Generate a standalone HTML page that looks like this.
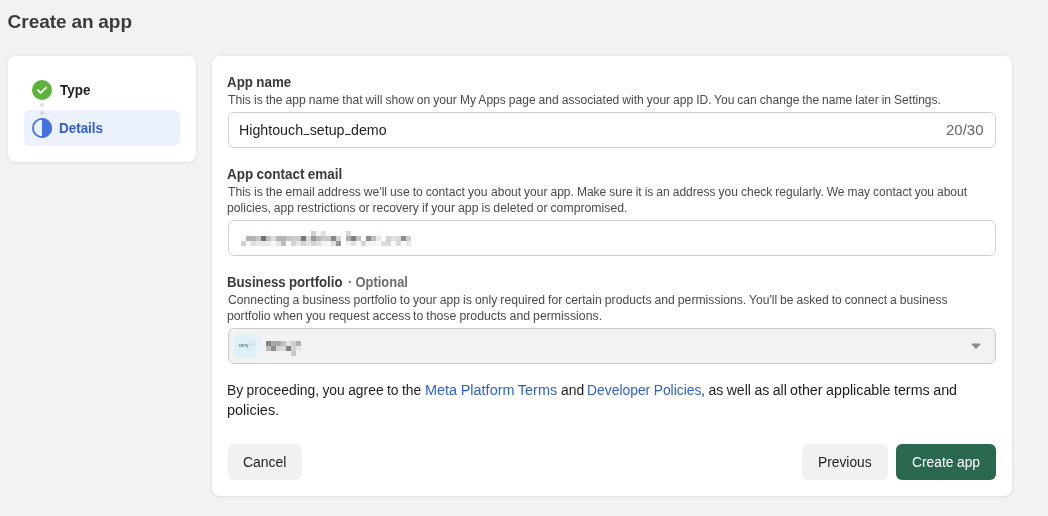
<!DOCTYPE html>
<html lang="en">
<head>
<meta charset="utf-8">
<title>Create an app</title>
<style>
*{box-sizing:border-box;margin:0;padding:0}
html,body{width:1048px;height:516px;overflow:hidden;background:#f2f2f2}
body{font-family:"Liberation Sans",sans-serif;color:#1c1e21;position:relative}
.t{position:absolute;display:block;white-space:pre;transform-origin:0 0;text-decoration:none;font-style:normal}
#root{position:absolute;left:0;top:0;width:1048px;height:516px;will-change:transform}
.t i{font-style:normal;display:inline-block;width:6.5px;transform-origin:0 0;transform:translate(0.7px,-2.6px) scaleX(0.68)}
.abs{position:absolute}
.card{position:absolute;background:#fff;border-radius:8px;box-shadow:0 0 4px rgba(0,0,0,.07),0 1px 2px rgba(0,0,0,.05)}
#side{left:8px;top:56px;width:188px;height:106px}
#main{left:212px;top:56px;width:800px;height:440px}
.hl{position:absolute;left:24px;top:110px;width:156px;height:36px;border-radius:6px;background:#ebf1fd}
.dot{position:absolute;width:4px;height:4px;border-radius:50%;left:40px}
.field{position:absolute;left:228px;width:768px;height:36px;border:1px solid #d0d0d0;border-radius:6px;background:#fff}
.field.dis{background:#f2f2f2;border-color:#cbcbcb}
.btn{position:absolute;top:444px;height:36px;border-radius:6px;background:#f1f1f1}
.btn.primary{background:#2a694e}
.px{position:absolute;width:5px;height:5px}
</style>
</head>
<body>
<div id="root">
<h1 id="t_title" class="t" style="left:7.55px;top:11px;font-size:19px;line-height:21px;font-weight:700;color:#3b3b3b;word-spacing:-0.58px;transform:scaleX(1.0000)">Create an app</h1>

<nav class="card" id="side"></nav>
<div class="hl"></div>
<svg class="abs" style="left:32px;top:80px" width="20" height="20" viewBox="0 0 20 20"><circle cx="10" cy="10" r="10" fill="#5db33a"/><path d="M5.9 10.2L8.6 12.9L14.1 7.6" fill="none" stroke="#fff" stroke-width="1.9" stroke-linecap="round" stroke-linejoin="round"/></svg>
<div class="dot" style="top:103px;background:#dddfe2"></div>
<div class="dot" style="top:111px;background:#d3d8e4"></div>
<svg class="abs" style="left:32px;top:118px" width="20" height="20" viewBox="0 0 20 20"><circle cx="10" cy="10" r="9.1" fill="none" stroke="#4470e0" stroke-width="1.8"/><path d="M10 0a10 10 0 0 1 0 20z" fill="#4470e0"/></svg>
<span id="t_type" class="t" style="left:59.50px;top:82px;font-size:14px;line-height:16px;font-weight:700;color:#1c1e21;word-spacing:-0.43px;transform:scaleX(0.9599)">Type</span>
<span id="t_details" class="t" style="left:58.65px;top:120px;font-size:14px;line-height:16px;font-weight:700;color:#2f5fcc;word-spacing:-0.43px;transform:scaleX(0.9595)">Details</span>

<main class="card" id="main"></main>

<label id="t_l1" class="t" style="left:226.55px;top:74px;font-size:14px;line-height:16px;font-weight:700;color:#3a3a3a;word-spacing:-0.43px;transform:scaleX(0.9547)">App name</label>
<p><span id="t_h1a" class="t" style="left:227.70px;top:93px;font-size:12px;line-height:14px;font-weight:400;color:#4a4a4a;word-spacing:-0.37px;transform:scaleX(1.0122)">This is the app name that will show on your</span> <span id="t_h1b" class="t" style="left:459.50px;top:93px;font-size:12px;line-height:14px;font-weight:400;color:#4a4a4a;word-spacing:-0.37px;transform:scaleX(1.0042)">My Apps page and associated with your app ID.</span> <span id="t_h1c" class="t" style="left:713.60px;top:93px;font-size:12px;line-height:14px;font-weight:400;color:#4a4a4a;word-spacing:-0.37px;transform:scaleX(1.0052)">You can change the name later in Settings.</span></p>
<div class="field" style="top:112px"></div>
<span id="t_val" class="t" style="left:238.50px;top:122px;font-size:14px;line-height:16px;font-weight:400;color:#1c1e21;word-spacing:-0.43px;transform:scaleX(1.0159)">Hightouch<i>_</i>setup<i>_</i>demo</span>
<span id="t_cnt" class="t" style="left:945.70px;top:122px;font-size:14px;line-height:16px;font-weight:400;color:#666666;word-spacing:-0.43px;transform:scaleX(1.0712)">20/30</span>

<label id="t_l2" class="t" style="left:226.70px;top:166px;font-size:14px;line-height:16px;font-weight:700;color:#3a3a3a;word-spacing:-0.43px;transform:scaleX(0.9625)">App contact email</label>
<p><span id="t_h2a" class="t" style="left:227.70px;top:185px;font-size:12px;line-height:14px;font-weight:400;color:#4a4a4a;word-spacing:-0.37px;transform:scaleX(1.0120)">This is the email address we'll use to contact you</span> <span id="t_h2b" class="t" style="left:490.55px;top:185px;font-size:12px;line-height:14px;font-weight:400;color:#4a4a4a;word-spacing:-0.37px;transform:scaleX(1.0030)">about your app. Make sure it is an address you</span> <span id="t_h2c" class="t" style="left:740.50px;top:185px;font-size:12px;line-height:14px;font-weight:400;color:#4a4a4a;word-spacing:-0.37px;transform:scaleX(0.9995)">check regularly. We may contact you about</span> <span id="t_h2d" class="t" style="left:226.70px;top:201px;font-size:12px;line-height:14px;font-weight:400;color:#4a4a4a;word-spacing:-0.37px;transform:scaleX(1.0105)">policies, app restrictions or recovery</span> <span id="t_h2e" class="t" style="left:421.60px;top:201px;font-size:12px;line-height:14px;font-weight:400;color:#4a4a4a;word-spacing:-0.37px;transform:scaleX(1.0210)">if your app is deleted or compromised.</span></p>
<div class="field" style="top:220px"></div>
<svg class="abs" style="left:241px;top:231px" width="175" height="15" viewBox="0 0 175 15" shape-rendering="crispEdges"><rect x="5" y="0" width="5" height="5" fill="#fafafa"/><rect x="25" y="0" width="5" height="5" fill="#fcfcfc"/><rect x="30" y="0" width="5" height="5" fill="#fdfdfd"/><rect x="70" y="0" width="5" height="5" fill="#cfcfcf"/><rect x="75" y="0" width="5" height="5" fill="#f5f5f5"/><rect x="80" y="0" width="5" height="5" fill="#e0e0e0"/><rect x="85" y="0" width="5" height="5" fill="#fafafa"/><rect x="100" y="0" width="5" height="5" fill="#fbfbfb"/><rect x="105" y="0" width="5" height="5" fill="#d8d8d8"/><rect x="135" y="0" width="5" height="5" fill="#fafafa"/><rect x="0" y="5" width="5" height="5" fill="#fbfbfb"/><rect x="5" y="5" width="5" height="5" fill="#b0b0b0"/><rect x="10" y="5" width="5" height="5" fill="#b3b3b3"/><rect x="15" y="5" width="5" height="5" fill="#c8c8c8"/><rect x="20" y="5" width="5" height="5" fill="#707070"/><rect x="25" y="5" width="5" height="5" fill="#c0c0c0"/><rect x="30" y="5" width="5" height="5" fill="#dedede"/><rect x="35" y="5" width="5" height="5" fill="#b4b4b4"/><rect x="40" y="5" width="5" height="5" fill="#b6b6b6"/><rect x="45" y="5" width="5" height="5" fill="#c4c4c4"/><rect x="50" y="5" width="5" height="5" fill="#cbcbcb"/><rect x="55" y="5" width="5" height="5" fill="#cccccc"/><rect x="60" y="5" width="5" height="5" fill="#787878"/><rect x="65" y="5" width="5" height="5" fill="#d8d8d8"/><rect x="70" y="5" width="5" height="5" fill="#999999"/><rect x="75" y="5" width="5" height="5" fill="#b5b5b5"/><rect x="80" y="5" width="5" height="5" fill="#cacaca"/><rect x="85" y="5" width="5" height="5" fill="#c8c8c8"/><rect x="90" y="5" width="5" height="5" fill="#888888"/><rect x="95" y="5" width="5" height="5" fill="#d4d4d4"/><rect x="100" y="5" width="5" height="5" fill="#fdfdfd"/><rect x="105" y="5" width="5" height="5" fill="#b0b0b0"/><rect x="110" y="5" width="5" height="5" fill="#808080"/><rect x="115" y="5" width="5" height="5" fill="#c0c0c0"/><rect x="120" y="5" width="5" height="5" fill="#fcfcfc"/><rect x="125" y="5" width="5" height="5" fill="#8c8c8c"/><rect x="130" y="5" width="5" height="5" fill="#bcbcbc"/><rect x="135" y="5" width="5" height="5" fill="#e8e8e8"/><rect x="145" y="5" width="5" height="5" fill="#d2d2d2"/><rect x="150" y="5" width="5" height="5" fill="#e0e0e0"/><rect x="155" y="5" width="5" height="5" fill="#dadada"/><rect x="160" y="5" width="5" height="5" fill="#8e8e8e"/><rect x="165" y="5" width="5" height="5" fill="#cdcdcd"/><rect x="170" y="5" width="5" height="5" fill="#fafafa"/><rect x="0" y="10" width="5" height="5" fill="#d0d0d0"/><rect x="5" y="10" width="5" height="5" fill="#f8f8f8"/><rect x="10" y="10" width="5" height="5" fill="#dedede"/><rect x="15" y="10" width="5" height="5" fill="#e6e6e6"/><rect x="20" y="10" width="5" height="5" fill="#e9e9e9"/><rect x="25" y="10" width="5" height="5" fill="#e8e8e8"/><rect x="30" y="10" width="5" height="5" fill="#f8f8f8"/><rect x="35" y="10" width="5" height="5" fill="#e6e6e6"/><rect x="40" y="10" width="5" height="5" fill="#bebebe"/><rect x="50" y="10" width="5" height="5" fill="#d4d4d4"/><rect x="55" y="10" width="5" height="5" fill="#e6e6e6"/><rect x="60" y="10" width="5" height="5" fill="#d4d4d4"/><rect x="65" y="10" width="5" height="5" fill="#e2e2e2"/><rect x="70" y="10" width="5" height="5" fill="#d4d4d4"/><rect x="75" y="10" width="5" height="5" fill="#dcdcdc"/><rect x="80" y="10" width="5" height="5" fill="#f2f2f2"/><rect x="85" y="10" width="5" height="5" fill="#f4f4f4"/><rect x="90" y="10" width="5" height="5" fill="#e0e0e0"/><rect x="95" y="10" width="5" height="5" fill="#969696"/><rect x="100" y="10" width="5" height="5" fill="#fcfcfc"/><rect x="105" y="10" width="5" height="5" fill="#f2f2f2"/><rect x="110" y="10" width="5" height="5" fill="#e2e2e2"/><rect x="115" y="10" width="5" height="5" fill="#fbfbfb"/><rect x="120" y="10" width="5" height="5" fill="#d6d6d6"/><rect x="125" y="10" width="5" height="5" fill="#f4f4f4"/><rect x="130" y="10" width="5" height="5" fill="#f4f4f4"/><rect x="135" y="10" width="5" height="5" fill="#fcfcfc"/><rect x="140" y="10" width="5" height="5" fill="#dcdcdc"/><rect x="145" y="10" width="5" height="5" fill="#d8d8d8"/><rect x="150" y="10" width="5" height="5" fill="#fbfbfb"/><rect x="155" y="10" width="5" height="5" fill="#dadada"/><rect x="160" y="10" width="5" height="5" fill="#fdfdfd"/><rect x="165" y="10" width="5" height="5" fill="#e8e8e8"/><rect x="170" y="10" width="5" height="5" fill="#f8f8f8"/></svg>

<label id="t_l3" class="t" style="left:226.50px;top:274px;font-size:14px;line-height:16px;font-weight:700;color:#3a3a3a;word-spacing:-0.43px;transform:scaleX(0.9430)">Business portfolio</label> <span id="t_l3o" class="t" style="left:347.55px;top:274px;font-size:14px;line-height:16px;font-weight:700;color:#6e6e6e;word-spacing:-0.43px;transform:scaleX(0.9238)">· Optional</span>
<p><span id="t_h3a" class="t" style="left:227.70px;top:293px;font-size:12px;line-height:14px;font-weight:400;color:#4a4a4a;word-spacing:-0.37px;transform:scaleX(1.0148)">Connecting a business portfolio to your app is</span> <span id="t_h3b" class="t" style="left:474.60px;top:293px;font-size:12px;line-height:14px;font-weight:400;color:#4a4a4a;word-spacing:-0.37px;transform:scaleX(1.0148)">only required for certain products and permissions.</span> <span id="t_h3c" class="t" style="left:748.60px;top:293px;font-size:12px;line-height:14px;font-weight:400;color:#4a4a4a;word-spacing:-0.37px;transform:scaleX(1.0069)">You'll be asked to connect a business</span> <span id="t_h3d" class="t" style="left:226.70px;top:309px;font-size:12px;line-height:14px;font-weight:400;color:#4a4a4a;word-spacing:-0.37px;transform:scaleX(1.0203)">portfolio when you request access</span> <span id="t_h3e" class="t" style="left:412.65px;top:309px;font-size:12px;line-height:14px;font-weight:400;color:#4a4a4a;word-spacing:-0.37px;transform:scaleX(1.0241)">to those products and permissions.</span></p>
<div class="field dis" style="top:328px"></div>
<svg class="abs" style="left:234px;top:334px" width="28" height="24" viewBox="0 0 28 24"><rect x="0" y="0" width="24" height="24" rx="6" fill="#e0f0f8"/><g shape-rendering="crispEdges"><rect x="22" y="2" width="5" height="5" fill="#ebf3f7"/><rect x="22" y="7" width="5" height="5" fill="#e6f1f8"/><rect x="22" y="12" width="5" height="5" fill="#e8f2f7"/><rect x="22" y="17" width="5" height="5" fill="#ebf3f7"/><rect x="17" y="7" width="5" height="5" fill="#d5e6ee"/><rect x="12" y="7" width="5" height="5" fill="#dcedf5"/><rect x="12" y="12" width="5" height="5" fill="#dbecf4"/></g><text x="4.8" y="13.1" font-family="Liberation Sans, sans-serif" font-size="5" font-weight="700" fill="#55808f" textLength="9.6" lengthAdjust="spacingAndGlyphs">carry</text></svg>
<svg class="abs" style="left:266px;top:341px" width="35" height="15" viewBox="0 0 35 15" shape-rendering="crispEdges"><rect x="0" y="0" width="5" height="5" fill="#858585"/><rect x="5" y="0" width="5" height="5" fill="#a8a8a8"/><rect x="10" y="0" width="5" height="5" fill="#a8a8a8"/><rect x="15" y="0" width="5" height="5" fill="#c0c0c0"/><rect x="20" y="0" width="5" height="5" fill="#e4e4e4"/><rect x="25" y="0" width="5" height="5" fill="#cdcdcd"/><rect x="30" y="0" width="5" height="5" fill="#b0b0b0"/><rect x="0" y="5" width="5" height="5" fill="#bcbcbc"/><rect x="5" y="5" width="5" height="5" fill="#8c8c8c"/><rect x="10" y="5" width="5" height="5" fill="#d4d4d4"/><rect x="15" y="5" width="5" height="5" fill="#d8d8d8"/><rect x="20" y="5" width="5" height="5" fill="#858585"/><rect x="25" y="5" width="5" height="5" fill="#d2d2d2"/><rect x="30" y="5" width="5" height="5" fill="#e6e6e6"/><rect x="25" y="10" width="5" height="5" fill="#c8c8c8"/></svg>
<svg class="abs" style="left:970px;top:342px" width="12" height="8" viewBox="0 0 12 8"><path d="M2.2 2.1h7.7l-3.85 4.2z" fill="#8c8c8c" stroke="#8c8c8c" stroke-width="1.1" stroke-linejoin="round"/></svg>

<p><span id="t_ta" class="t" style="left:227.00px;top:382px;font-size:14px;line-height:16px;font-weight:400;color:#1c1e21;word-spacing:-0.43px;transform:scaleX(0.9895)">By proceeding, you agree to the</span> <a id="t_tb" class="t" style="left:424.50px;top:382px;font-size:14px;line-height:16px;font-weight:400;color:#2f5fcc;word-spacing:-0.43px;transform:scaleX(1.0324)">Meta Platform Terms</a> <span id="t_tc" class="t" style="left:560.70px;top:382px;font-size:14px;line-height:16px;font-weight:400;color:#1c1e21;word-spacing:-0.43px;transform:scaleX(0.9912)">and</span> <a id="t_td" class="t" style="left:586.60px;top:382px;font-size:14px;line-height:16px;font-weight:400;color:#2f5fcc;word-spacing:-0.43px;transform:scaleX(0.9906)">Developer Policies</a><span id="t_te" class="t" style="left:700.65px;top:382px;font-size:14px;line-height:16px;font-weight:400;color:#1c1e21;word-spacing:-0.43px;transform:scaleX(1.0044)">, as well as all</span> <span id="t_tg" class="t" style="left:789.70px;top:382px;font-size:14px;line-height:16px;font-weight:400;color:#1c1e21;word-spacing:-0.43px;transform:scaleX(1.0204)">other applicable terms and</span> <span id="t_tf" class="t" style="left:227.20px;top:402px;font-size:14px;line-height:16px;font-weight:400;color:#1c1e21;word-spacing:-0.43px;transform:scaleX(1.0303)">policies.</span></p>

<div class="btn" style="left:228px;width:74px"></div>
<div class="btn" style="left:802px;width:86px"></div>
<div class="btn primary" style="left:896px;width:100px"></div>
<span id="t_b1" class="t" style="left:242.65px;top:454px;font-size:14px;line-height:16px;font-weight:400;color:#1c1e21;word-spacing:-0.43px;transform:scaleX(0.9950)">Cancel</span>
<span id="t_b2" class="t" style="left:817.55px;top:454px;font-size:14px;line-height:16px;font-weight:400;color:#1c1e21;word-spacing:-0.43px;transform:scaleX(0.9853)">Previous</span>
<span id="t_b3" class="t" style="left:911.55px;top:454px;font-size:14px;line-height:16px;font-weight:400;color:#ffffff;word-spacing:-0.43px;transform:scaleX(0.9887)">Create app</span>
</div>
</body>
</html>
